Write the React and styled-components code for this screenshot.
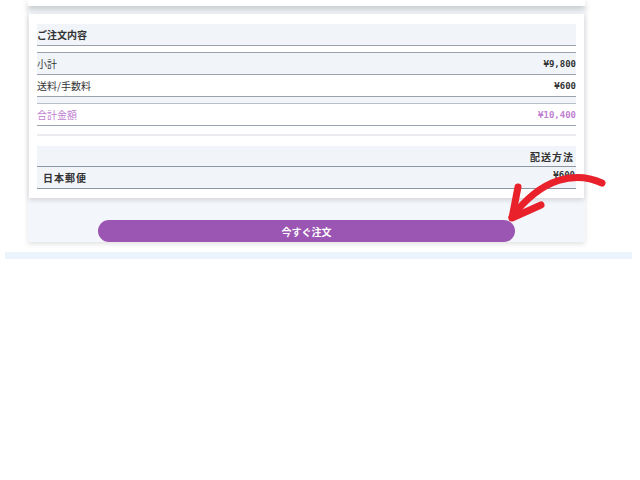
import React from 'react';
import styled, { createGlobalStyle } from 'styled-components';

const GlobalStyle = createGlobalStyle`
  body {
    margin: 0;
    background: #ffffff;
    font-family: "Noto Sans CJK JP", "Noto Sans", sans-serif;
    color: #333;
  }
`;

const Page = styled.div`
  position: relative;
  width: 640px;
  height: 480px;
  overflow: hidden;
`;

const TopCard = styled.div`
  position: relative;
  z-index: 1;
  margin-left: 28px;
  width: 557px;
  height: 6px;
  background: #fff;
  box-shadow: 0 3px 6px rgba(0, 0, 0, 0.22);
`;

const Panel = styled.div`
  margin-left: 28px;
  width: 557px;
  background: #f3f6fa;
  padding-top: 8px;
  box-shadow: 0 2px 5px rgba(0, 0, 0, 0.12);
  display: flex;
  flex-direction: column;
  align-items: center;
`;

const Card = styled.div`
  align-self: stretch;
  margin: 0 1px;
  background: #fff;
  padding: 10px 8px 9px 8px;
  box-shadow: 0 2px 5px rgba(0, 0, 0, 0.14);
  display: flex;
  flex-direction: column;
`;

const Row = styled.div`
  height: 21px;
  display: flex;
  align-items: center;
  justify-content: space-between;
  background: ${(p) => (p.$shade ? '#f1f5fa' : '#fff')};
  border-bottom: 1px solid #9aa2ad;
  border-top: ${(p) => (p.$top ? '1px solid #9aa2ad' : 'none')};
  margin-top: ${(p) => p.$gap || 0}px;
  font-size: 10px;
  color: ${(p) => (p.$accent ? '#c17fd1' : '#333')};
  font-weight: ${(p) => (p.$bold ? 600 : 400)};
`;

const Band = styled.div`
  height: 6px;
  background: #f1f5fa;
  border-bottom: 1px solid #b9bfc7;
`;

const Rule = styled.div`
  margin-top: 8px;
  height: 2px;
  background: #e9ebee;
`;

const ShipHead = styled.div`
  margin-top: 10px;
  height: 16px;
  background: #f1f5fa;
  border-bottom: 1px solid #8d96a2;
  display: flex;
  align-items: center;
  justify-content: flex-end;
  padding: 2px 2px 2px 0;
  font-size: 10px;
  font-weight: 600;
  letter-spacing: 1px;
  color: #333;
`;

const ShipRow = styled.div`
  height: 21px;
  display: flex;
  align-items: flex-start;
  justify-content: space-between;
  padding: 0 1px 0 6px;
  background: #f1f5fa;
  border-bottom: 1px solid #8d96a2;
  font-size: 10px;
  font-weight: 600;
  letter-spacing: 1px;
  line-height: 21px;
`;

const Price = styled.span`
  font-family: "DejaVu Sans Mono", "Liberation Mono", monospace;
  font-weight: 700;
  font-size: 9px;
  letter-spacing: 0;
  color: ${(p) => (p.$accent ? '#c17fd1' : '#333')};
  line-height: ${(p) => (p.$raised ? '16px' : 'normal')};
`;

const OrderButton = styled.button`
  margin-top: 22px;
  width: 417px;
  height: 22px;
  border: none;
  border-radius: 11px;
  background: #9b55b2;
  color: #fff;
  font-family: "Noto Sans CJK JP", sans-serif;
  font-size: 10px;
  font-weight: 700;
  cursor: pointer;
`;

const Strip = styled.div`
  margin: 10px 0 0 5px;
  width: 627px;
  height: 7px;
  background: #ebf3fc;
`;

const Arrow = styled.svg`
  position: absolute;
  left: 490px;
  top: 165px;
  pointer-events: none;
`;

export default function App() {
  return (
    <>
      <GlobalStyle />
      <Page>
        <TopCard />
        <Panel>
          <Card>
            <Row $shade $bold>ご注文内容</Row>
            <Row $shade $top $gap={6}>
              <span>小計</span>
              <Price>¥9,800</Price>
            </Row>
            <Row>
              <span>送料/手数料</span>
              <Price>¥600</Price>
            </Row>
            <Band />
            <Row $accent>
              <span>合計金額</span>
              <Price $accent>¥10,400</Price>
            </Row>
            <Rule />
            <ShipHead>配送方法</ShipHead>
            <ShipRow>
              <span>日本郵便</span>
              <Price $raised>¥600</Price>
            </ShipRow>
          </Card>
          <OrderButton>今すぐ注文</OrderButton>
        </Panel>
        <Strip />
        <Arrow width="120" height="60" viewBox="490 165 120 60">
          <g fill="none" stroke="#e8212b" strokeLinecap="round" strokeLinejoin="round">
            <path d="M602 183 C 576 171, 542 177, 512 217" strokeWidth="7" />
            <path d="M518 187 L 512 218 L 541 205" strokeWidth="7" />
          </g>
        </Arrow>
      </Page>
    </>
  );
}
